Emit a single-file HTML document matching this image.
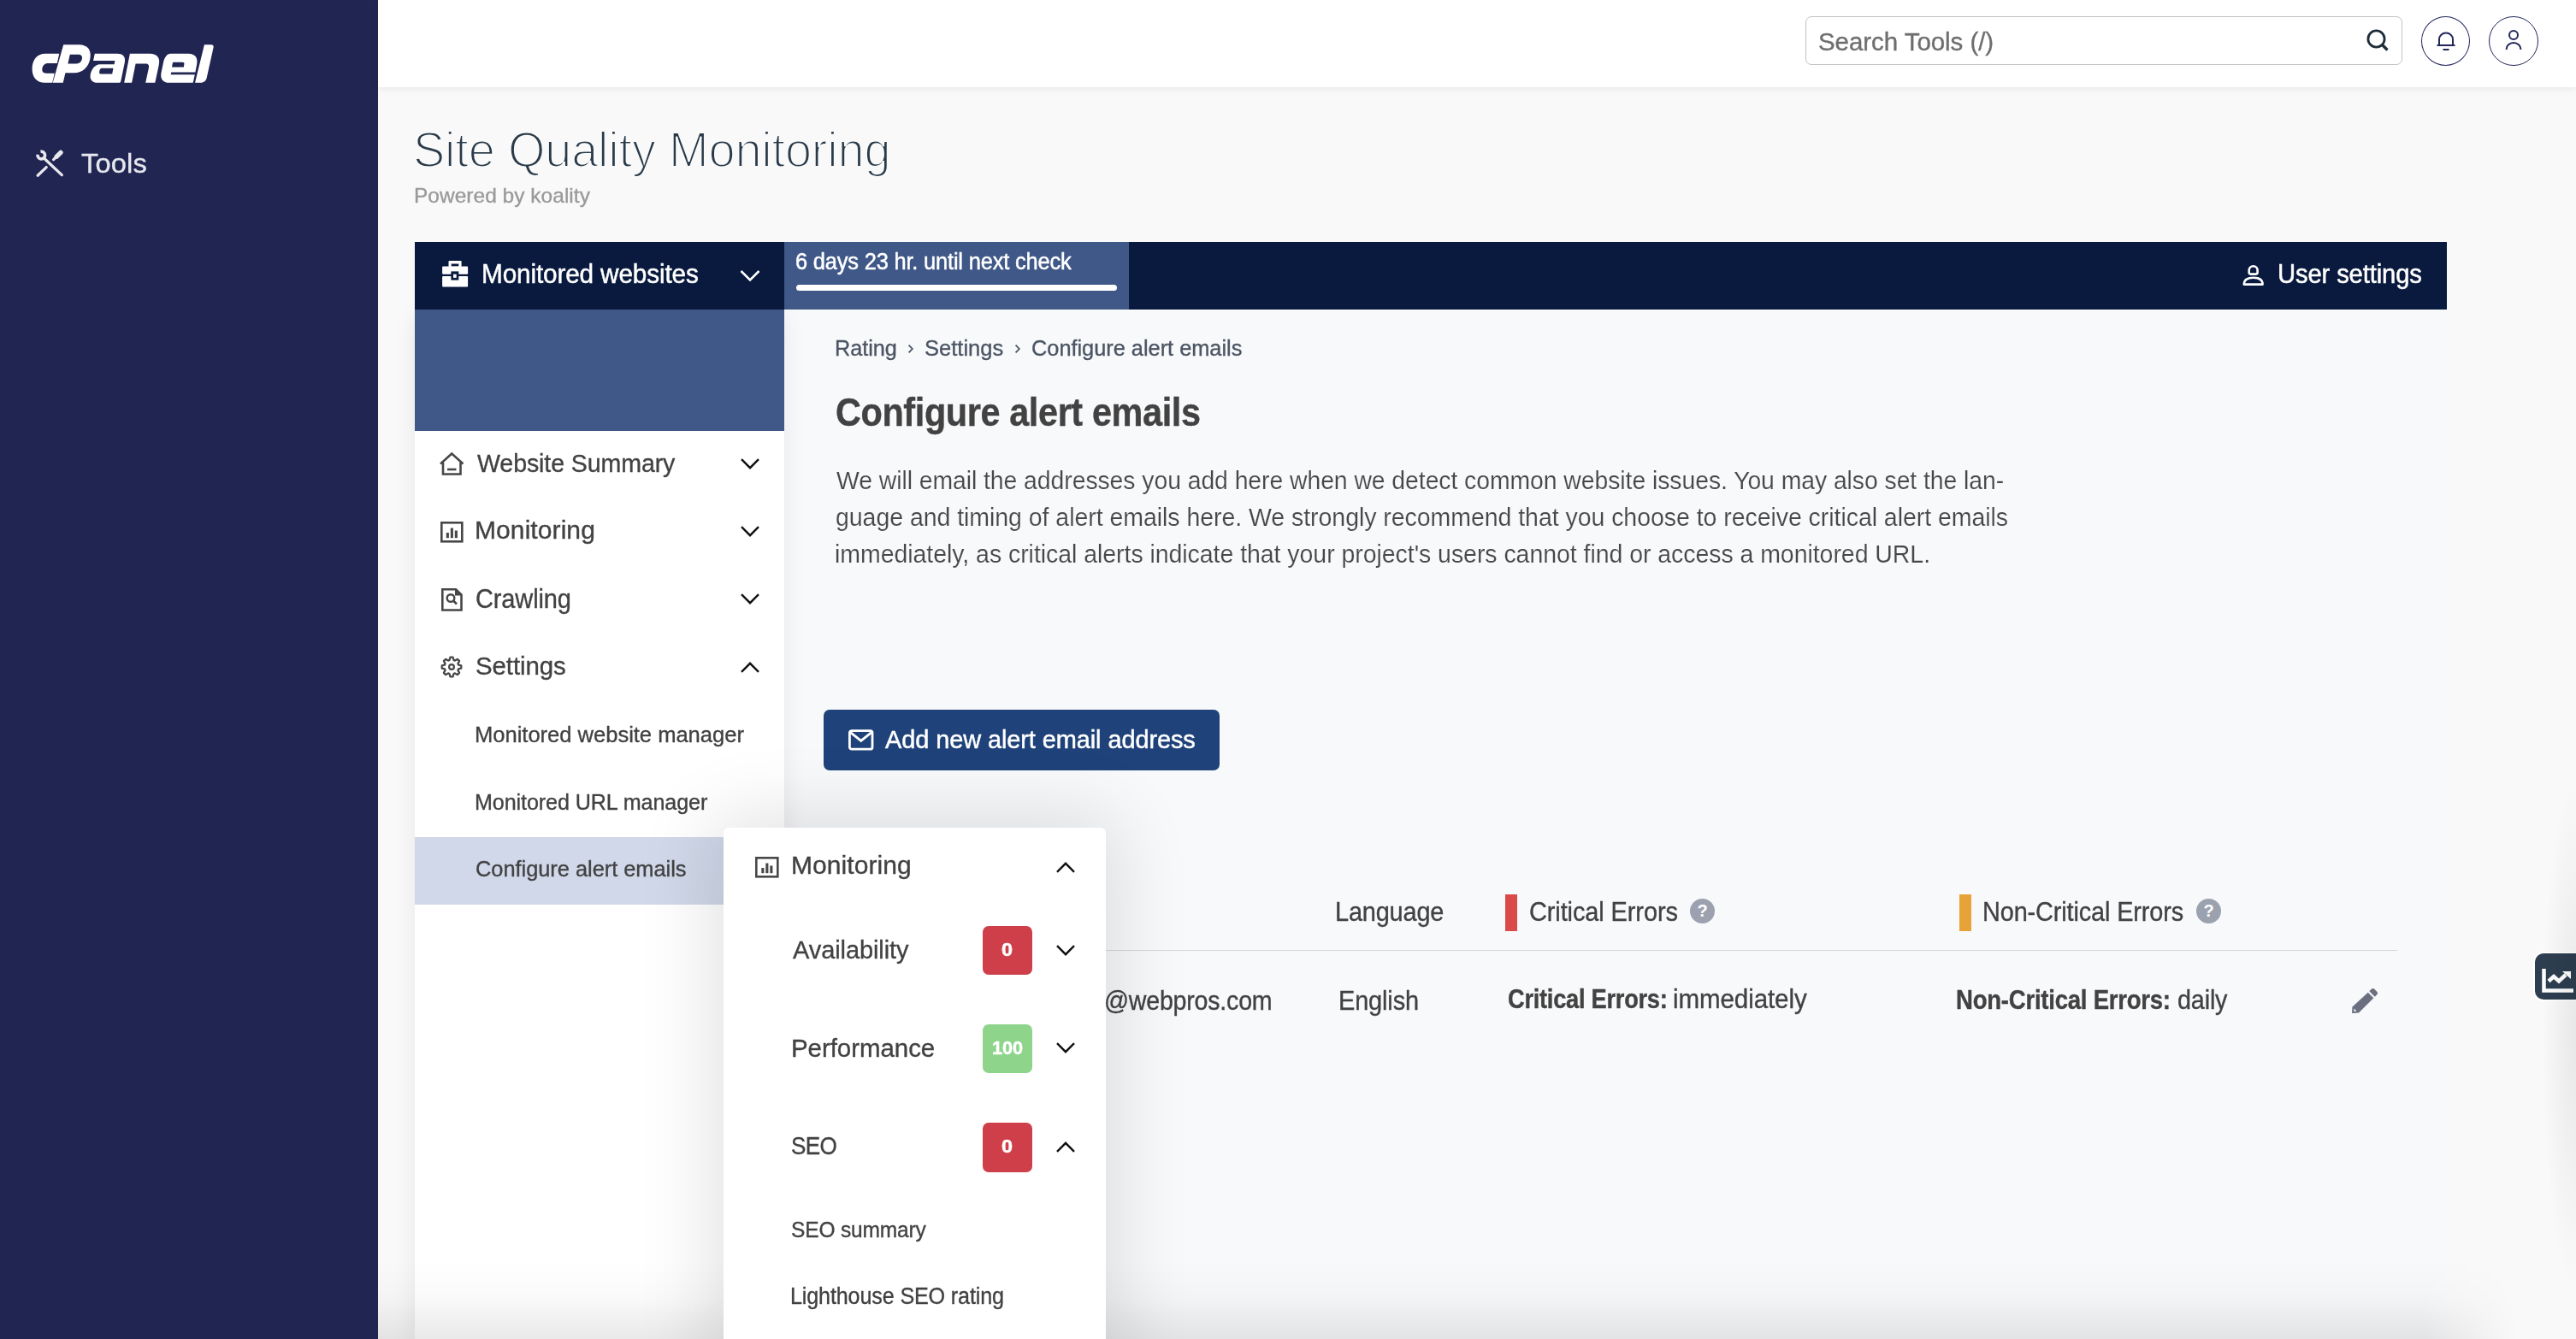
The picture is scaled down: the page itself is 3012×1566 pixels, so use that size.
<!DOCTYPE html>
<html><head><meta charset="utf-8">
<style>
html,body{margin:0;padding:0;}
body{width:3012px;height:1566px;position:relative;overflow:hidden;background:#f9f9f9;font-family:"Liberation Sans",sans-serif;}
.a{position:absolute;}
.t{position:absolute;white-space:nowrap;line-height:1;transform-origin:0 0;font-family:"Liberation Sans",sans-serif;}
svg{position:absolute;overflow:visible;}
</style></head><body>
<!-- sidebar -->
<div class="a" style="left:0;top:0;width:442px;height:1566px;background:#212552;"></div>
<svg style="left:30px;top:45px" width="230" height="60" viewBox="0 0 2576 672"><g fill="#fff" fill-rule="evenodd">
<path d="M440 200 L260 200 C140 200 85 290 85 400 C85 510 150 580 250 580 L350 580 L378 455 L275 455 C225 455 210 430 218 390 C226 345 255 325 300 325 L412 325 Z"/>
<path d="M495 80 L700 80 C810 80 865 150 845 260 C825 380 740 450 640 450 L520 450 L490 580 L355 580 Z M580 210 L690 210 C730 210 745 235 738 270 C730 310 705 330 665 330 L553 330 Z"/>
<path d="M905 200 L1200 200 C1285 200 1310 250 1297 315 L1245 565 C1242 575 1235 580 1220 580 L945 580 C870 580 838 535 848 475 C858 415 900 340 975 340 L1160 340 L1170 290 L885 290 Z M1000 390 L1148 390 L1133 465 L985 465 C968 465 962 455 965 440 C968 405 980 390 1000 390 Z"/>
<path d="M1365 200 L1625 200 C1720 200 1765 255 1745 345 L1695 580 L1570 580 L1612 385 C1620 350 1605 330 1570 330 L1440 330 L1390 580 L1290 580 Z"/>
<path d="M1900 200 L2130 200 C2220 200 2258 255 2242 335 L2222 442 L1907 442 L1901 472 L2215 472 L2192 580 L1880 580 C1800 580 1760 530 1775 450 L1800 330 C1815 250 1850 200 1900 200 Z M1935 310 L2055 310 C2075 310 2080 320 2076 340 L2070 375 L1915 375 L1922 335 C1925 318 1930 310 1935 310 Z"/>
<path d="M2340 80 L2430 80 C2455 80 2465 95 2460 115 L2370 520 C2360 560 2325 580 2285 580 L2218 580 Z"/>
</g></svg>
<svg style="left:36px;top:168px" width="44" height="44" viewBox="0 0 44 44">
  <g stroke="#e8e8ee" fill="none" stroke-linecap="round">
    <path d="M11.48 9.38 A4.3 4.3 0 1 1 8.08 12.78" stroke-width="3.6" stroke-linecap="butt"/>
    <line x1="16.2" y1="17.8" x2="36.3" y2="36.6" stroke-width="3.3"/>
    <line x1="8.1" y1="37.2" x2="18.2" y2="27.6" stroke-width="3.3"/>
    <line x1="26.6" y1="18.6" x2="29.5" y2="15.8" stroke-width="3.3"/>
    <line x1="30.2" y1="15.2" x2="35.0" y2="10.4" stroke-width="5.4"/>
  </g>
</svg>

<!-- header -->
<div class="a" style="left:442px;top:0;width:2570px;height:102px;background:#fff;box-shadow:0 2px 8px rgba(0,0,0,0.07);"></div>
<div class="a" style="left:2111px;top:19px;width:696px;height:55px;border:1.5px solid #c2c2c2;border-radius:7px;background:#fff;"></div>
<svg style="left:2766px;top:33px" width="30" height="30" viewBox="0 0 30 30">
  <circle cx="12.5" cy="12.5" r="9.6" stroke="#1f2d3a" stroke-width="2.8" fill="none"/>
  <line x1="19.5" y1="19.5" x2="25.5" y2="25.5" stroke="#1f2d3a" stroke-width="3.4" stroke-linecap="butt"/>
</svg>
<div class="a" style="left:2831px;top:19px;width:55px;height:56px;border:1.5px solid #22275a;border-radius:50%;"></div>
<div class="a" style="left:2910px;top:19px;width:56px;height:56px;border:1.5px solid #22275a;border-radius:50%;"></div>
<svg style="left:2849px;top:37px" width="22" height="22" viewBox="0 0 22 22">
  <path d="M3 16 V9 A8 7.5 0 0 1 19 9 V16" stroke="#22275a" stroke-width="2" fill="none"/>
  <line x1="0.5" y1="16" x2="21.5" y2="16" stroke="#22275a" stroke-width="2"/>
  <line x1="7.5" y1="21" x2="14.5" y2="21" stroke="#22275a" stroke-width="2"/>
</svg>
<svg style="left:2929px;top:35px" width="20" height="24" viewBox="0 0 20 24">
  <circle cx="10" cy="6" r="5" stroke="#22275a" stroke-width="2" fill="none"/>
  <path d="M1.5 23 A8.5 8 0 0 1 18.5 23" stroke="#22275a" stroke-width="2" fill="none"/>
</svg>

<!-- koality card bg -->
<div class="a" style="left:917px;top:362px;width:1944px;height:1204px;background:#f8f9fb;"></div>

<!-- nav bar -->
<div class="a" style="left:485px;top:283px;width:2376px;height:79px;background:#091a3e;"></div>
<div class="a" style="left:917px;top:283px;width:403px;height:79px;background:#3f5888;"></div>
<div class="a" style="left:931px;top:333px;width:375px;height:7px;background:#fff;border-radius:4px;"></div>
<svg style="left:516px;top:305px" width="32" height="31" viewBox="0 0 32 31">
  <rect x="8.5" y="0.1" width="15.1" height="7" rx="1" fill="#fff"/>
  <rect x="11.7" y="3.5" width="8.6" height="3.2" fill="#091a3e"/>
  <rect x="1.1" y="6.5" width="30" height="9.2" rx="1" fill="#fff"/>
  <rect x="1.1" y="18" width="30" height="12.6" rx="1" fill="#fff"/>
  <rect x="11.4" y="12.4" width="8.9" height="10.2" fill="#091a3e"/>
  <rect x="14" y="15.7" width="3.7" height="4.2" fill="#fff"/>
</svg>
<svg style="left:865px;top:315px" width="24" height="15" viewBox="0 0 24 15">
  <path d="M1.5 2 L12 12.5 L22.5 2" stroke="#fff" stroke-width="2.6" fill="none"/>
</svg>
<svg style="left:2622px;top:310px" width="26" height="25" viewBox="0 0 26 25">
  <path d="M7.7 8.6 V6.2 A4.95 5 0 0 1 17.6 6.2 V8.6 Q17.6 10.6 15.6 10.6 H9.7 Q7.7 10.6 7.7 8.6 Z" stroke="#fff" stroke-width="2.6" fill="none"/>
  <path d="M1.8 22.6 C1.8 17 6 14.7 12.7 14.7 C19.4 14.7 23.6 17 23.6 22.6 Z" stroke="#fff" stroke-width="2.6" stroke-linejoin="round" fill="none"/>
</svg>

<!-- left panel -->
<div class="a" style="left:485px;top:362px;width:432px;height:1204px;background:#fff;box-shadow:0 8px 26px rgba(0,0,0,0.075);"></div>
<div class="a" style="left:485px;top:362px;width:432px;height:142px;background:#3f5888;"></div>
<div class="a" style="left:485px;top:979px;width:432px;height:79px;background:#d0d8e9;"></div>

<!-- menu icons -->
<svg style="left:514px;top:529px" width="29" height="27" viewBox="0 0 29 27">
  <path d="M4 12 V25.5 H24.5 V12" stroke="#474747" stroke-width="2.6" fill="none"/>
  <path d="M1 13.5 L14.25 1.5 L27.5 13.5" stroke="#474747" stroke-width="2.6" fill="none"/>
  <line x1="9" y1="20" x2="19.5" y2="20" stroke="#474747" stroke-width="2.6"/>
</svg>
<svg style="left:515px;top:610px" width="27" height="25" viewBox="0 0 27 25">
  <rect x="1.3" y="1.3" width="24" height="22" stroke="#474747" stroke-width="2.6" fill="none"/>
  <rect x="6.8" y="13" width="3.1" height="6.2" fill="#474747"/>
  <rect x="11.8" y="7.5" width="3.1" height="11.7" fill="#474747"/>
  <rect x="16.8" y="10.5" width="3.1" height="8.7" fill="#474747"/>
</svg>
<svg style="left:516px;top:688px" width="25" height="27" viewBox="0 0 25 27">
  <path d="M1.3 1.3 H17 L23.5 7.5 V25.5 H1.3 Z" stroke="#474747" stroke-width="2.6" fill="none"/>
  <path d="M16 1 L24 8.5 L16 8.5 Z" fill="#474747"/>
  <circle cx="11" cy="11.5" r="4.3" stroke="#474747" stroke-width="2.4" fill="none"/>
  <line x1="14" y1="14.5" x2="18" y2="18.5" stroke="#474747" stroke-width="2.6"/>
</svg>
<svg style="left:514.3px;top:766px" width="28" height="28" viewBox="0 0 28 28">
  <path d="M11.54 5.97 L12.41 2.71 L15.59 2.71 L16.46 5.97 L17.94 6.58 L20.86 4.90 L23.10 7.14 L21.42 10.06 L22.03 11.54 L25.29 12.41 L25.29 15.59 L22.03 16.46 L21.42 17.94 L23.10 20.86 L20.86 23.10 L17.94 21.42 L16.46 22.03 L15.59 25.29 L12.41 25.29 L11.54 22.03 L10.06 21.42 L7.14 23.10 L4.90 20.86 L6.58 17.94 L5.97 16.46 L2.71 15.59 L2.71 12.41 L5.97 11.54 L6.58 10.06 L4.90 7.14 L7.14 4.90 L10.06 6.58 Z" stroke="#474747" stroke-width="2.3" stroke-linejoin="round" fill="none"/>
  <circle cx="14" cy="14" r="2.9" stroke="#474747" stroke-width="2.2" fill="none"/>
</svg>
<svg style="left:865px;top:535px" width="24" height="15" viewBox="0 0 24 15"><path d="M2 2.2 L12 12.2 L22 2.2" stroke="#111" stroke-width="2.4" fill="none"/></svg>
<svg style="left:865px;top:614px" width="24" height="15" viewBox="0 0 24 15"><path d="M2 2.2 L12 12.2 L22 2.2" stroke="#111" stroke-width="2.4" fill="none"/></svg>
<svg style="left:865px;top:693px" width="24" height="15" viewBox="0 0 24 15"><path d="M2 2.2 L12 12.2 L22 2.2" stroke="#111" stroke-width="2.4" fill="none"/></svg>
<svg style="left:865px;top:773px" width="24" height="15" viewBox="0 0 24 15"><path d="M2 12.8 L12 2.8 L22 12.8" stroke="#111" stroke-width="2.4" fill="none"/></svg>

<!-- breadcrumb chevrons -->
<svg style="left:1060px;top:401px" width="10" height="14" viewBox="0 0 10 14"><path d="M2.6 2.6 L6.8 7 L2.6 11.4" stroke="#4b5563" stroke-width="1.8" fill="none"/></svg>
<svg style="left:1185px;top:401px" width="10" height="14" viewBox="0 0 10 14"><path d="M2.6 2.6 L6.8 7 L2.6 11.4" stroke="#4b5563" stroke-width="1.8" fill="none"/></svg>

<!-- button -->
<div class="a" style="left:963px;top:830px;width:463px;height:71px;background:#1e4279;border-radius:7px;"></div>
<svg style="left:991px;top:853px" width="31" height="25" viewBox="0 0 31 25">
  <rect x="2.4" y="1.6" width="26.6" height="21.6" rx="2.5" stroke="#fff" stroke-width="2.8" fill="none"/>
  <path d="M3.2 3.4 L15.7 13.4 L28.2 3.4" stroke="#fff" stroke-width="2.8" fill="none"/>
</svg>

<!-- table -->
<div class="a" style="left:1760px;top:1046px;width:14px;height:43px;background:#d94a48;"></div>
<div class="a" style="left:2291px;top:1046px;width:14px;height:43px;background:#e8a338;"></div>
<div class="a" style="left:1976px;top:1051px;width:29px;height:29px;border-radius:50%;background:#9ba1ae;color:#fff;font-weight:700;font-size:20px;line-height:29px;text-align:center;">?</div>
<div class="a" style="left:2568px;top:1051px;width:29px;height:29px;border-radius:50%;background:#9ba1ae;color:#fff;font-weight:700;font-size:20px;line-height:29px;text-align:center;">?</div>
<div class="a" style="left:963px;top:1111px;width:1840px;height:1px;background:#d3d6dc;"></div>
<svg style="left:2749px;top:1155px" width="32" height="31" viewBox="0 0 32 31">
  <path d="M24 1.5 Q25.5 0.3 27 1.5 L30.5 5 Q31.7 6.5 30.5 8 L27.8 10.7 L21.3 4.2 Z" fill="#6b6f80"/>
  <path d="M19.8 5.7 L26.3 12.2 L9 29.5 L1 30 L1.5 22.5 Z" fill="#6b6f80"/>
  <path d="M3.5 24.5 L6.5 27.5 L3.2 27.8 Z" fill="#f8f9fb"/>
</svg>

<!-- floating chart button -->
<div class="a" style="left:2964px;top:1115px;width:70px;height:54px;background:#2d3e50;border-radius:10px;box-shadow:0 0 0 2px #fff;"></div>
<svg style="left:2972px;top:1132px" width="40" height="30" viewBox="0 0 40 30">
  <path d="M2.5 1 V26.5 H37" stroke="#fff" stroke-width="4.5" fill="none"/>
  <path d="M8 15.5 L14 10 L20 15.5 L28 8" stroke="#fff" stroke-width="4.5" fill="none"/>
  <path d="M24 4 H34 V13 Z" fill="#fff"/>
</svg>

<!-- vignettes -->
<div class="a" style="left:442px;top:1476px;width:2500px;height:90px;background:linear-gradient(to bottom, rgba(0,0,0,0) 0%, rgba(0,0,0,0.02) 45%, rgba(0,0,0,0.085) 100%);-webkit-mask-image:linear-gradient(to right,#000 0,#000 2390px,transparent 2500px);"></div>
<div class="a" style="left:2950px;top:880px;width:62px;height:686px;background:radial-gradient(ellipse 40px 300px at 100% 48%, rgba(0,0,0,0.07), rgba(0,0,0,0) 100%);"></div>
<!-- popup -->
<div class="a" style="z-index:5;left:846px;top:968px;width:447px;height:640px;background:#fff;border-radius:6px;box-shadow:0 0 90px 12px rgba(0,0,0,0.12);"></div>
<svg style="z-index:6;left:883px;top:1002px" width="29" height="25" viewBox="0 0 29 25">
  <rect x="1.3" y="1.3" width="25" height="22" stroke="#474747" stroke-width="2.6" fill="none"/>
  <rect x="7.3" y="13" width="3.1" height="6.2" fill="#474747"/>
  <rect x="12.3" y="7.5" width="3.1" height="11.7" fill="#474747"/>
  <rect x="17.3" y="10.5" width="3.1" height="8.7" fill="#474747"/>
</svg>
<svg style="z-index:6;left:1234px;top:1007px" width="24" height="15" viewBox="0 0 24 15"><path d="M2 12.8 L12 2.8 L22 12.8" stroke="#111" stroke-width="2.4" fill="none"/></svg>
<svg style="z-index:6;left:1234px;top:1104px" width="24" height="15" viewBox="0 0 24 15"><path d="M2 2.2 L12 12.2 L22 2.2" stroke="#111" stroke-width="2.4" fill="none"/></svg>
<svg style="z-index:6;left:1234px;top:1218px" width="24" height="15" viewBox="0 0 24 15"><path d="M2 2.2 L12 12.2 L22 2.2" stroke="#111" stroke-width="2.4" fill="none"/></svg>
<svg style="z-index:6;left:1234px;top:1334px" width="24" height="15" viewBox="0 0 24 15"><path d="M2 12.8 L12 2.8 L22 12.8" stroke="#111" stroke-width="2.4" fill="none"/></svg>
<div class="a" style="z-index:5;left:1149px;top:1083px;width:58px;height:57px;border-radius:7px;background:#cf3f4a;"></div>
<div class="a" style="z-index:5;left:1149px;top:1198px;width:58px;height:57px;border-radius:7px;background:#8ed48b;"></div>
<div class="a" style="z-index:5;left:1149px;top:1313px;width:58px;height:58px;border-radius:7px;background:#cf3f4a;"></div>

<div class="t" style="left:94.8px;top:176.4px;font-size:31.25px;letter-spacing:0.136px;transform:scaleX(1.0440);color:#e6e7ee;font-weight:400;-webkit-text-stroke-width:0.35px;z-index:1;">Tools</div>
<div class="t" style="left:2126.1px;top:34.3px;font-size:30.09px;letter-spacing:-0.049px;transform:scaleX(0.9800);color:#6e6e6e;font-weight:400;-webkit-text-stroke-width:0.35px;z-index:1;">Search Tools (/)</div>
<div class="t" style="left:482.7px;top:146.0px;font-size:58.28px;letter-spacing:-0.191px;transform:scaleX(0.9597);color:#293a4a;font-weight:400;-webkit-text-stroke:2.2px #f9f9f9;z-index:1;">Site Quality Monitoring</div>
<div class="t" style="left:484.3px;top:217.4px;font-size:23.84px;letter-spacing:0.051px;transform:scaleX(1.0251);color:#9a9a9a;font-weight:400;-webkit-text-stroke-width:0.35px;z-index:1;">Powered by koality</div>
<div class="t" style="left:562.5px;top:304.7px;font-size:31.40px;letter-spacing:-0.149px;transform:scaleX(0.9474);color:#ffffff;font-weight:400;-webkit-text-stroke:0.5px #fff;z-index:1;">Monitored websites</div>
<div class="t" style="left:930.4px;top:292.4px;font-size:28.05px;letter-spacing:-0.212px;transform:scaleX(0.9074);color:#ffffff;font-weight:400;-webkit-text-stroke:0.5px #fff;z-index:1;">6 days 23 hr. until next check</div>
<div class="t" style="left:2663.0px;top:306.1px;font-size:30.96px;letter-spacing:-0.149px;transform:scaleX(0.9445);color:#ffffff;font-weight:400;-webkit-text-stroke:0.5px #fff;z-index:1;">User settings</div>
<div class="t" style="left:557.7px;top:526.9px;font-size:29.65px;letter-spacing:-0.111px;transform:scaleX(0.9641);color:#424242;font-weight:400;-webkit-text-stroke-width:0.35px;z-index:1;">Website Summary</div>
<div class="t" style="left:555.4px;top:605.9px;font-size:29.22px;letter-spacing:0.071px;transform:scaleX(1.0276);color:#424242;font-weight:400;-webkit-text-stroke-width:0.35px;z-index:1;">Monitoring</div>
<div class="t" style="left:556.3px;top:685.2px;font-size:30.52px;letter-spacing:-0.147px;transform:scaleX(0.9506);color:#424242;font-weight:400;-webkit-text-stroke-width:0.35px;z-index:1;">Crawling</div>
<div class="t" style="left:556.1px;top:764.2px;font-size:30.23px;letter-spacing:-0.073px;transform:scaleX(0.9734);color:#424242;font-weight:400;-webkit-text-stroke-width:0.35px;z-index:1;">Settings</div>
<div class="t" style="left:555.0px;top:846.1px;font-size:26.02px;letter-spacing:-0.038px;transform:scaleX(0.9838);color:#424242;font-weight:400;-webkit-text-stroke-width:0.35px;z-index:1;">Monitored website manager</div>
<div class="t" style="left:555.0px;top:924.9px;font-size:26.16px;letter-spacing:-0.100px;transform:scaleX(0.9607);color:#424242;font-weight:400;-webkit-text-stroke-width:0.35px;z-index:1;">Monitored URL manager</div>
<div class="t" style="left:555.8px;top:1004.0px;font-size:25.87px;letter-spacing:-0.036px;transform:scaleX(0.9829);color:#424242;font-weight:400;-webkit-text-stroke-width:0.35px;z-index:1;">Configure alert emails</div>
<div class="t" style="left:976.4px;top:395.0px;font-size:25.44px;letter-spacing:-0.020px;transform:scaleX(0.9917);color:#4b5563;font-weight:400;-webkit-text-stroke-width:0.35px;z-index:1;">Rating</div>
<div class="t" style="left:1081.2px;top:395.0px;font-size:25.44px;letter-spacing:0.007px;transform:scaleX(1.0029);color:#4b5563;font-weight:400;-webkit-text-stroke-width:0.35px;z-index:1;">Settings</div>
<div class="t" style="left:1205.7px;top:395.0px;font-size:25.44px;letter-spacing:-0.008px;transform:scaleX(0.9962);color:#4b5563;font-weight:400;-webkit-text-stroke-width:0.35px;z-index:1;">Configure alert emails</div>
<div class="t" style="left:977.1px;top:460.0px;font-size:45.78px;letter-spacing:-0.402px;transform:scaleX(0.9040);color:#424242;font-weight:700;-webkit-text-stroke-width:0.4px;z-index:1;">Configure alert emails</div>
<div class="t" style="left:978.2px;top:548.0px;font-size:29.07px;letter-spacing:-0.058px;transform:scaleX(0.9759);color:#474747;font-weight:400;-webkit-text-stroke:0.15px #f8f9fb;z-index:1;">We will email the addresses you add here when we detect common website issues. You may also set the lan-</div>
<div class="t" style="left:977.3px;top:591.1px;font-size:29.07px;letter-spacing:-0.045px;transform:scaleX(0.9805);color:#474747;font-weight:400;-webkit-text-stroke:0.15px #f8f9fb;z-index:1;">guage and timing of alert emails here. We strongly recommend that you choose to receive critical alert emails</div>
<div class="t" style="left:976.4px;top:633.5px;font-size:29.07px;letter-spacing:-0.045px;transform:scaleX(0.9801);color:#474747;font-weight:400;-webkit-text-stroke:0.15px #f8f9fb;z-index:1;">immediately, as critical alerts indicate that your project's users cannot find or access a monitored URL.</div>
<div class="t" style="left:1035.4px;top:849.5px;font-size:30.09px;letter-spacing:-0.098px;transform:scaleX(0.9624);color:#ffffff;font-weight:400;-webkit-text-stroke:0.5px #fff;z-index:1;">Add new alert email address</div>
<div class="t" style="left:1560.7px;top:1050.8px;font-size:30.52px;letter-spacing:-0.180px;transform:scaleX(0.9471);color:#424242;font-weight:400;-webkit-text-stroke-width:0.35px;z-index:1;">Language</div>
<div class="t" style="left:1788.1px;top:1050.8px;font-size:30.52px;letter-spacing:-0.118px;transform:scaleX(0.9497);color:#424242;font-weight:400;-webkit-text-stroke-width:0.35px;z-index:1;">Critical Errors</div>
<div class="t" style="left:2318.1px;top:1050.8px;font-size:30.52px;letter-spacing:-0.134px;transform:scaleX(0.9460);color:#424242;font-weight:400;-webkit-text-stroke-width:0.35px;z-index:1;">Non-Critical Errors</div>
<div class="t" style="left:1290.8px;top:1154.5px;font-size:30.52px;letter-spacing:-0.219px;transform:scaleX(0.9363);color:#424242;font-weight:400;-webkit-text-stroke-width:0.35px;z-index:1;">@webpros.com</div>
<div class="t" style="left:1564.5px;top:1154.5px;font-size:30.52px;letter-spacing:-0.149px;transform:scaleX(0.9483);color:#424242;font-weight:400;-webkit-text-stroke-width:0.35px;z-index:1;">English</div>
<div class="t" style="left:1762.7px;top:1154.0px;font-size:30.81px;letter-spacing:-0.302px;transform:scaleX(0.8849);color:#424242;font-weight:700;-webkit-text-stroke-width:0.4px;z-index:1;">Critical Errors:</div>
<div class="t" style="left:1955.9px;top:1154.0px;font-size:30.81px;letter-spacing:-0.116px;transform:scaleX(0.9603);color:#424242;font-weight:400;-webkit-text-stroke-width:0.35px;z-index:1;">immediately</div>
<div class="t" style="left:2287.3px;top:1154.2px;font-size:30.52px;letter-spacing:-0.263px;transform:scaleX(0.9025);color:#424242;font-weight:700;-webkit-text-stroke-width:0.4px;z-index:1;">Non-Critical Errors:</div>
<div class="t" style="left:2545.5px;top:1154.2px;font-size:30.52px;letter-spacing:-0.163px;transform:scaleX(0.9417);color:#424242;font-weight:400;-webkit-text-stroke-width:0.35px;z-index:1;">daily</div>
<div class="t" style="left:924.6px;top:998.1px;font-size:29.22px;letter-spacing:0.069px;transform:scaleX(1.0270);color:#424242;font-weight:400;-webkit-text-stroke-width:0.35px;z-index:7;">Monitoring</div>
<div class="t" style="left:926.9px;top:1095.8px;font-size:30.23px;letter-spacing:-0.093px;transform:scaleX(0.9600);color:#424242;font-weight:400;-webkit-text-stroke-width:0.35px;z-index:7;">Availability</div>
<div class="t" style="left:924.6px;top:1210.5px;font-size:29.80px;letter-spacing:-0.035px;transform:scaleX(0.9881);color:#424242;font-weight:400;-webkit-text-stroke-width:0.35px;z-index:7;">Performance</div>
<div class="t" style="left:925.3px;top:1325.4px;font-size:30.23px;letter-spacing:-0.780px;transform:scaleX(0.8646);color:#424242;font-weight:400;-webkit-text-stroke-width:0.35px;z-index:7;">SEO</div>
<div class="t" style="left:925.3px;top:1424.6px;font-size:26.02px;letter-spacing:-0.175px;transform:scaleX(0.9425);color:#424242;font-weight:400;-webkit-text-stroke-width:0.35px;z-index:7;">SEO summary</div>
<div class="t" style="left:924.1px;top:1503.1px;font-size:26.74px;letter-spacing:-0.145px;transform:scaleX(0.9395);color:#424242;font-weight:400;-webkit-text-stroke-width:0.35px;z-index:7;">Lighthouse SEO rating</div>
<div class="t" style="left:1170.9px;top:1099.8px;font-size:21.80px;letter-spacing:0.000px;transform:scaleX(1.0762);color:#ffffff;font-weight:700;-webkit-text-stroke:0.5px #fff;z-index:7;">0</div>
<div class="t" style="left:1159.7px;top:1214.5px;font-size:21.80px;letter-spacing:0.000px;transform:scaleX(0.9927);color:#ffffff;font-weight:700;-webkit-text-stroke:0.5px #fff;z-index:7;">100</div>
<div class="t" style="left:1170.9px;top:1329.8px;font-size:21.80px;letter-spacing:0.000px;transform:scaleX(1.0762);color:#ffffff;font-weight:700;-webkit-text-stroke:0.5px #fff;z-index:7;">0</div>
</body></html>
